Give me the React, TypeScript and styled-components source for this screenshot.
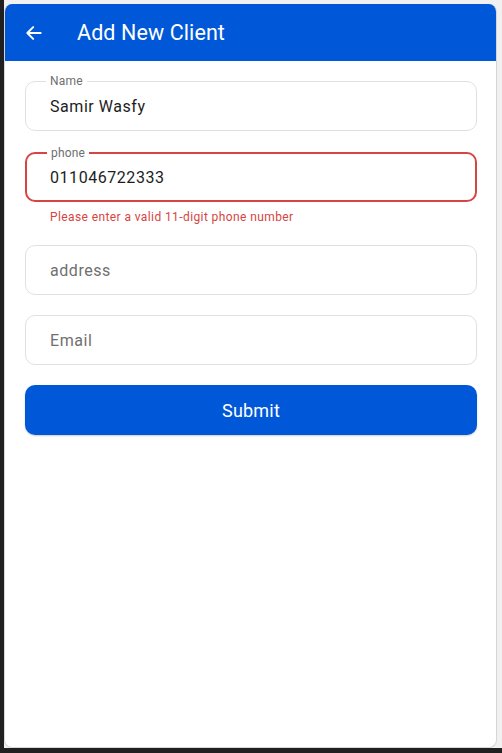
import React from "react";
import styled, { createGlobalStyle } from "styled-components";

const Global = createGlobalStyle`
  html, body { margin: 0; padding: 0; }
  body { font-family: Roboto, "Noto Sans", sans-serif; background: #f1f1f1; }
  * { box-sizing: border-box; }
`;

const Frame = styled.div`
  width: 502px;
  height: 753px;
  background: #f1f1f1;
  border-left: 4px solid #202020;
  border-bottom: 5px solid #202020;
  padding: 4px 5px 0 0;
  display: flex;
`;

const Card = styled.div`
  flex: 1;
  background: #fff;
  border: 1px solid #d6d6d6;
  border-top: none;
  border-radius: 8px;
  overflow: hidden;
  display: flex;
  flex-direction: column;
`;

const AppBar = styled.header`
  height: 57px;
  background: #0058d8;
  display: flex;
  align-items: center;
  padding-left: 19px;
  gap: 33px;
  color: #fff;
`;

const Title = styled.h1`
  margin: 0;
  font-size: 21.5px;
  font-weight: 400;
  letter-spacing: 0.1px;
`;

const Form = styled.div`
  display: flex;
  flex-direction: column;
  padding: 20px 19px 0 20px;
`;

const FieldBox = styled.div<{ $error?: boolean; $mb: number }>`
  position: relative;
  height: 50px;
  border: ${(p) => (p.$error ? "2px solid #d64541" : "1px solid #e0e0e0")};
  border-radius: 10px;
  display: flex;
  align-items: center;
  padding-left: ${(p) => (p.$error ? "23px" : "24px")};
  margin-bottom: ${(p) => p.$mb}px;
`;

const Legend = styled.span`
  position: absolute;
  top: -8px;
  left: 20px;
  padding: 0 4px;
  background: #fff;
  font-size: 12px;
  color: #6f6f6f;
  line-height: 14px;
  letter-spacing: 0.2px;
`;

const Value = styled.span<{ $placeholder?: boolean }>`
  font-size: 16px;
  letter-spacing: 0.55px;
  color: ${(p) => (p.$placeholder ? "#707070" : "#1d1d1d")};
  margin-top: 1px;
`;

const ErrorText = styled.div`
  font-size: 12px;
  color: #d64541;
  padding-left: 25px;
  margin-top: 8px;
  margin-bottom: 21px;
  letter-spacing: 0.4px;
`;

const SubmitButton = styled.button`
  height: 50px;
  border: none;
  border-radius: 10px;
  background: #0058d8;
  color: #fff;
  font-family: Roboto, sans-serif;
  font-size: 18px;
  font-weight: 400;
  letter-spacing: 0.2px;
  box-shadow: 0 1px 2px rgba(0, 0, 0, 0.2);
`;

const BackIcon = () => (
  <svg width="20" height="20" viewBox="0 0 24 24" fill="none">
    <path d="M20 12H4.5M11 5l-7 7 7 7" stroke="#fff" strokeWidth="2.4" strokeLinecap="round" strokeLinejoin="round" />
  </svg>
);

export default function App() {
  return (
    <>
      <Global />
      <Frame>
        <Card>
          <AppBar>
            <BackIcon />
            <Title>Add New Client</Title>
          </AppBar>
          <Form>
            <FieldBox $mb={21}>
              <Legend>Name</Legend>
              <Value>Samir Wasfy</Value>
            </FieldBox>
            <FieldBox $error $mb={0}>
              <Legend>phone</Legend>
              <Value>011046722333</Value>
            </FieldBox>
            <ErrorText>Please enter a valid 11-digit phone number</ErrorText>
            <FieldBox $mb={20}>
              <Value $placeholder>address</Value>
            </FieldBox>
            <FieldBox $mb={20}>
              <Value $placeholder>Email</Value>
            </FieldBox>
            <SubmitButton>Submit</SubmitButton>
          </Form>
        </Card>
      </Frame>
    </>
  );
}
